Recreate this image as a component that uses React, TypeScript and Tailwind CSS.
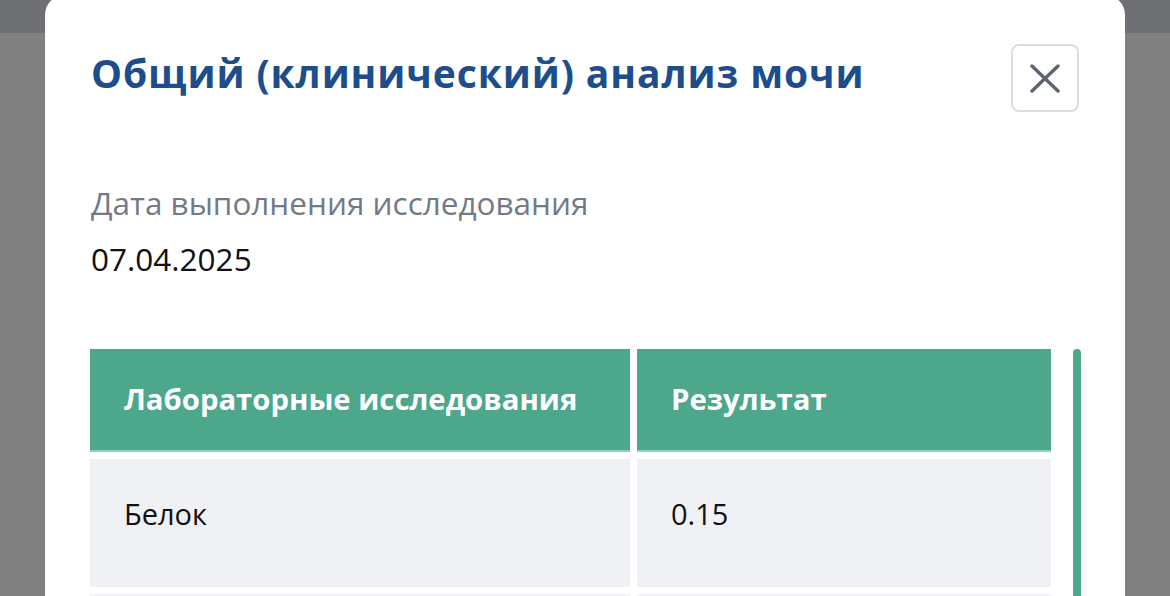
import React from "react";

export default function App() {
  return (
    <div
      className="relative w-[1170px] h-[596px] overflow-hidden bg-[#808080]"
      style={{ fontFamily: '"Open Sans", "Noto Sans", sans-serif' }}
    >
      <div className="h-[33px] bg-[#6f7073]" />
      <div className="absolute left-[45px] top-[-5px] w-[1080px] h-[700px] rounded-[20px] bg-white pt-[49px] pl-[46px] pr-[44px]">
        <div className="flex items-start justify-between pr-[2px]">
          <h1 className="mt-[3px] text-[39px] leading-[52px] tracking-[0.9px] font-bold text-[#1e4d8c]">
            Общий (клинический) анализ мочи
          </h1>
          <button className="w-[68px] h-[68px] rounded-[8px] border-2 border-[#dddddd] flex items-center justify-center bg-white">
            <svg width="30" height="30" viewBox="0 0 30 30" fill="none">
              <path
                d="M2 3 L28 28 M28 3 L2 28"
                stroke="#5d6470"
                strokeWidth="3.4"
                strokeLinecap="round"
              />
            </svg>
          </button>
        </div>
        <div className="mt-[70px] text-[31.5px] leading-[42px] text-[#737a86]">
          Дата выполнения исследования
        </div>
        <div className="mt-[14px] text-[31.5px] leading-[42px] text-[#111111]">
          07.04.2025
        </div>
        <div className="mt-[69px] flex items-start">
          <div className="w-[961px] -ml-[1px] grid grid-cols-[540px_414px] gap-[7px] self-start">
            <div className="h-[103px] bg-[#4ca78b] border-b-2 border-[#8fd0bb] flex items-center pl-[34px] text-[29.3px] font-bold text-white">
              Лабораторные исследования
            </div>
            <div className="h-[103px] bg-[#4ca78b] border-b-2 border-[#8fd0bb] flex items-center pl-[34px] text-[29.3px] font-bold text-white">
              Результат
            </div>
            <div className="h-[128px] bg-[#f0f1f5] pt-[35px] pl-[34px] text-[29px] leading-[40px] text-[#111111]">
              Белок
            </div>
            <div className="h-[128px] bg-[#f0f1f5] pt-[35px] pl-[34px] text-[29px] leading-[40px] text-[#111111]">
              0.15
            </div>
            <div className="h-[128px] bg-[#f0f1f5]" />
            <div className="h-[128px] bg-[#f0f1f5]" />
          </div>
          <div className="ml-[22px] w-[8px] h-[400px] rounded-full bg-[#4ca78b]" />
        </div>
      </div>
    </div>
  );
}
